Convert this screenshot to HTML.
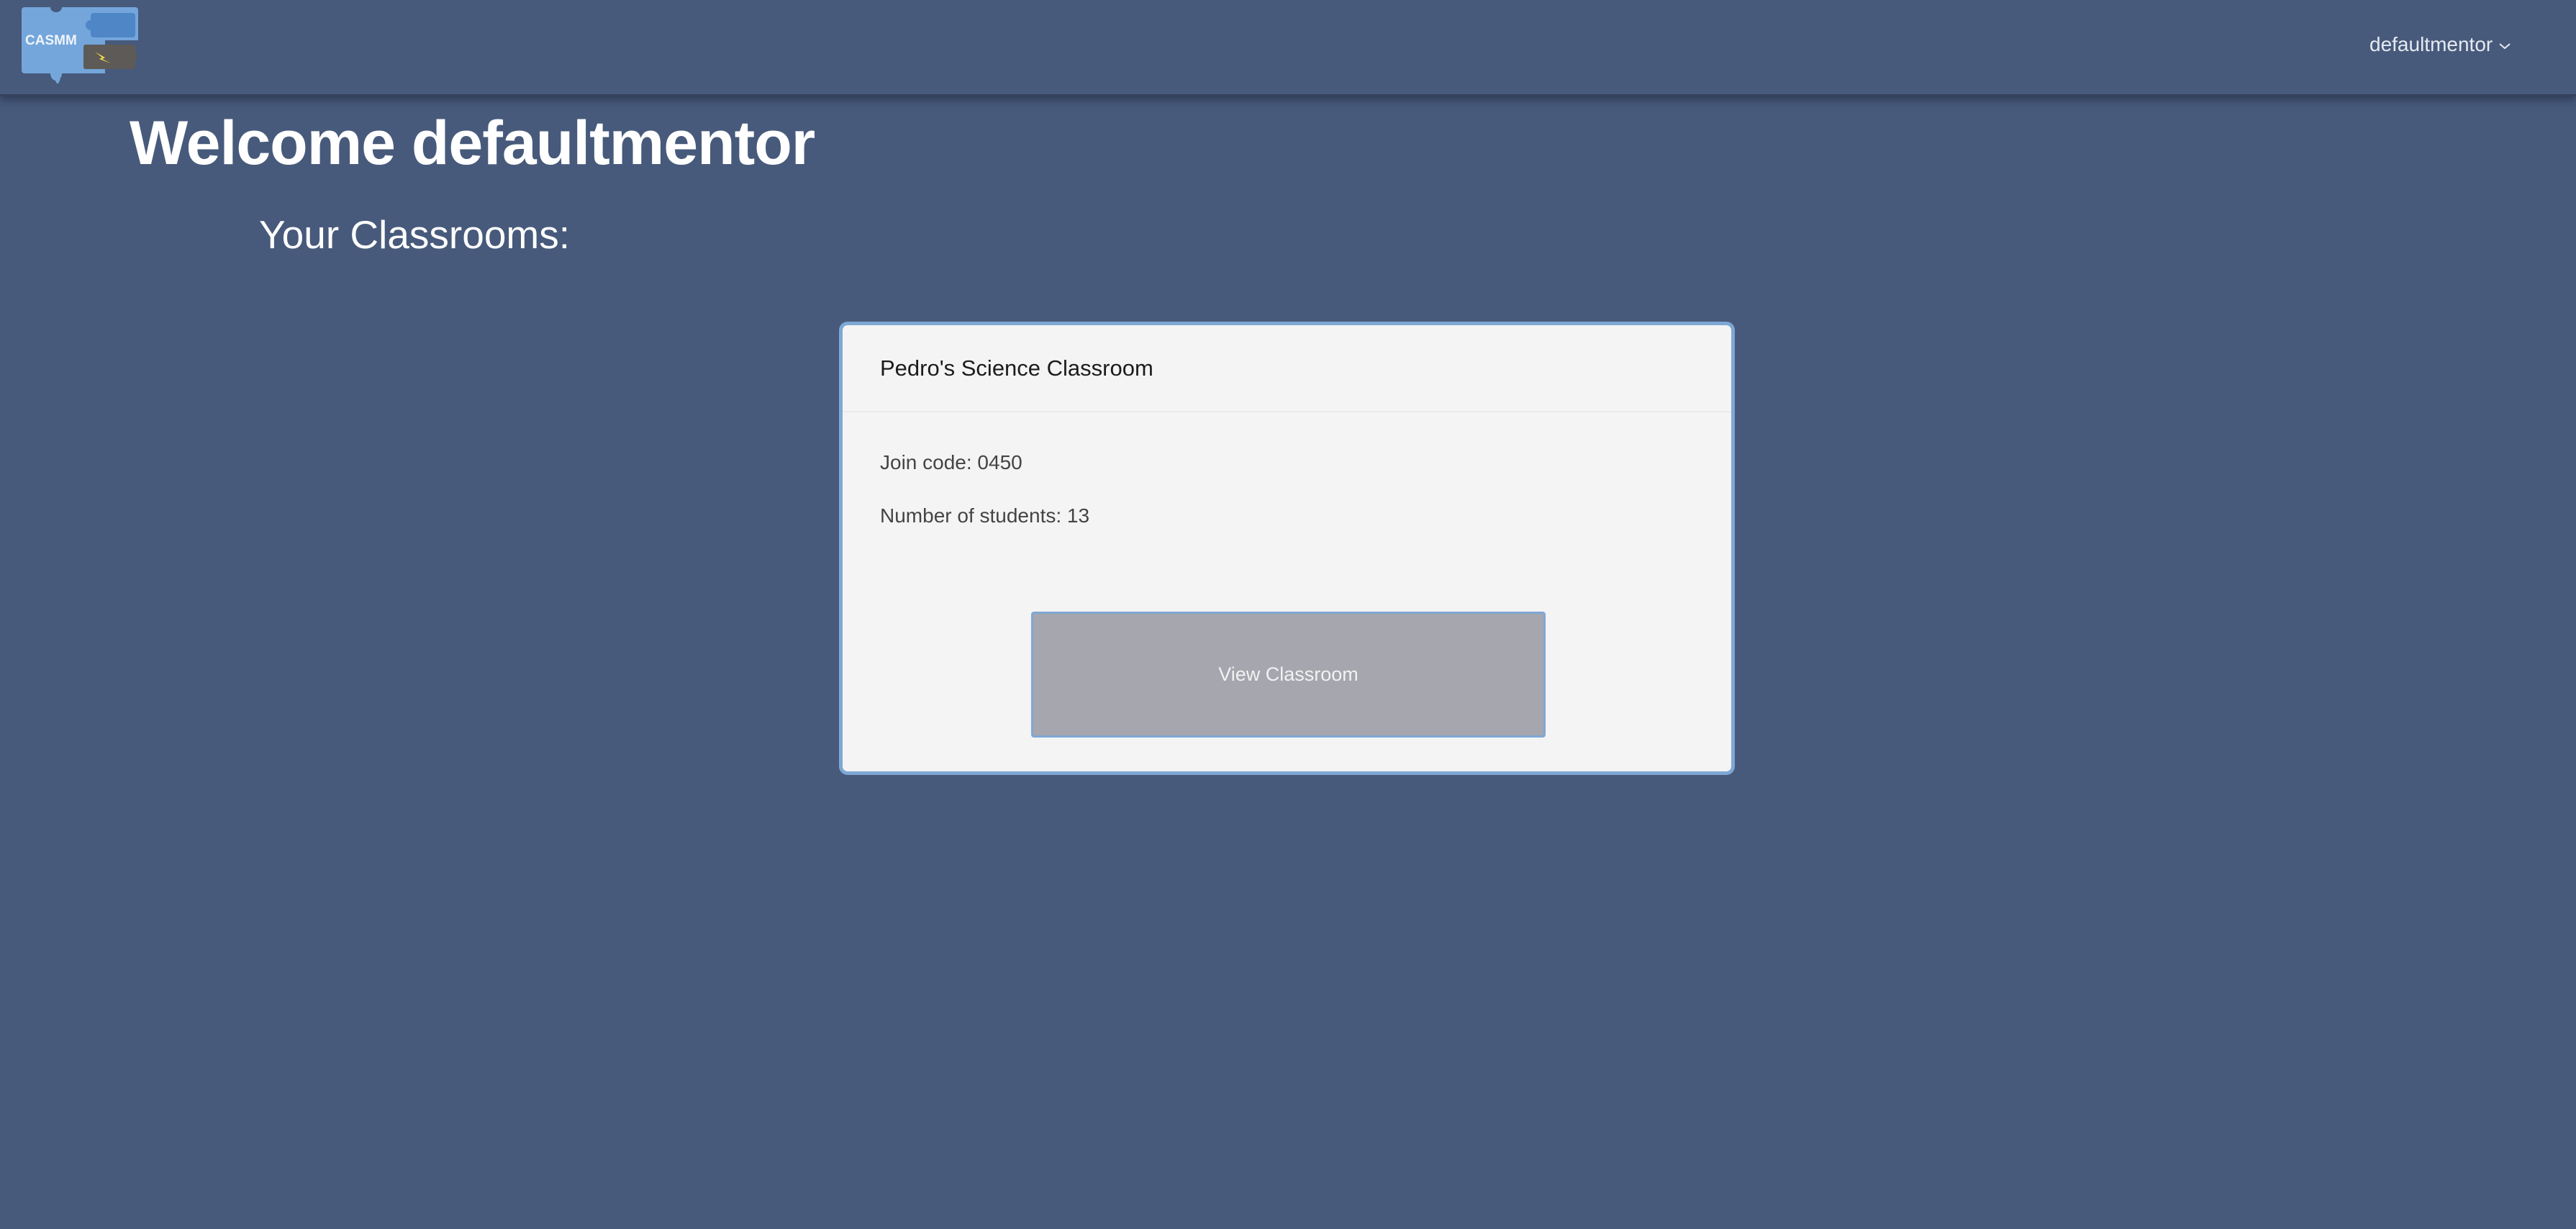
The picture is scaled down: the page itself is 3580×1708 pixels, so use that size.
<!DOCTYPE html>
<html><head><meta charset="utf-8"><style>
html,body{margin:0;padding:0;}
body{width:3580px;height:1708px;background:#475a7b;font-family:"Liberation Sans",Arial,sans-serif;position:relative;overflow:hidden;}
.hdr{position:absolute;left:0;top:0;width:3580px;height:131px;background:#475a7b;border-bottom:3px solid #34425e;box-shadow:0 4px 12px rgba(20,30,50,.55);}
.user{position:absolute;left:3293px;top:46px;color:#e6e9f0;font-size:28px;}
.user svg{vertical-align:middle;margin-left:8px;}
h1{position:absolute;left:180px;top:150px;margin:0;color:#fff;font-size:86px;font-weight:bold;letter-spacing:-1px;white-space:nowrap;}
h2{position:absolute;left:360px;top:294px;margin:0;color:#fff;font-size:55px;font-weight:normal;white-space:nowrap;}
.card{position:absolute;left:1166px;top:447px;width:1235px;height:620px;background:#f4f4f4;border:5px solid #7ea8d4;border-radius:12px;}
.card .t{position:absolute;left:52px;top:42px;font-size:31px;color:#1c1c1c;}
.card .line{position:absolute;left:0;right:0;top:119px;height:2px;background:#ebebeb;}
.card .p{position:absolute;left:52px;font-size:28px;color:#444;}
.btn{position:absolute;left:262px;top:398px;width:709px;height:169px;background:#a5a6ae;border:3px solid #7ea8d4;border-radius:4px;color:#f2f2f2;font-size:27px;text-align:center;line-height:169px;}
</style></head><body>
<div class="hdr">
  <svg style="position:absolute;left:28px;top:6px" width="170" height="110" viewBox="0 0 170 110">
    <path d="M6 4 H42 a8 7 0 0 0 16 0 H160 a4 4 0 0 1 4 4 V50 H118 V96 H58 a8 10 0 0 1 -16 0 H6 a4 4 0 0 1 -4 -4 V8 a4 4 0 0 1 4 -4z" fill="#74a6db"/>
    <path d="M48 104 l4 8 l4 -8z" fill="#74a6db"/>
    <rect x="98" y="12" width="62" height="34" rx="4" fill="#4f86c6"/>
    <circle cx="98" cy="29" r="7" fill="#4f86c6"/>
    <rect x="88" y="56" width="72" height="34" rx="3" fill="#5d5a58"/>
    <rect x="158" y="64" width="4" height="14" fill="#5d5a58"/>
    <path d="M104 66 l14 8 l-4 2 l12 6 l-16 -6 l4 -2z" fill="#f2df4a"/>
    <text x="7" y="56" fill="#eef4fb" font-size="19" font-weight="bold" font-family="Liberation Sans,sans-serif">CASMM</text>
  </svg>
  <div class="user">defaultmentor<svg width="18" height="12" viewBox="0 0 18 12"><path d="M2 3 L9 9 L16 3" stroke="#e6e9f0" stroke-width="2" fill="none"/></svg></div>
</div>
<h1>Welcome defaultmentor</h1>
<h2>Your Classrooms:</h2>
<div class="card">
  <div class="t">Pedro's Science Classroom</div>
  <div class="line"></div>
  <div class="p" style="top:175px">Join code: 0450</div>
  <div class="p" style="top:249px">Number of students: 13</div>
  <div class="btn">View Classroom</div>
</div>
</body></html>
